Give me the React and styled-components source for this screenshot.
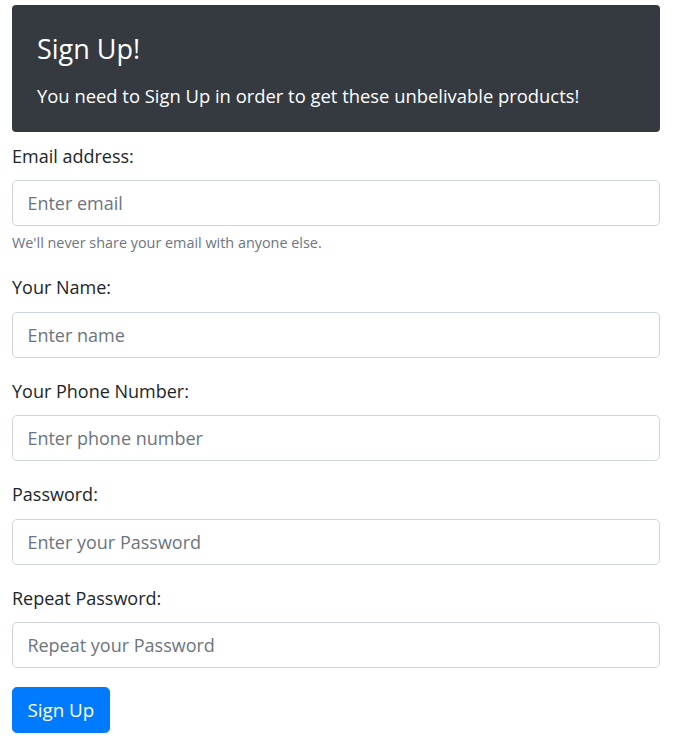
import React from 'react';
import styled, { createGlobalStyle } from 'styled-components';

const GlobalStyle = createGlobalStyle`
    * {
        box-sizing: border-box;
    }
    body {
        margin: 0;
        background: #fff;
        color: #212529;
        font-family: "Open Sans", "Noto Sans", sans-serif;
        font-size: 18px;
        line-height: 28.8px;
    }
`

const Page = styled.div`
    width: 648px;
    margin: 5px 0 0 12px;
    padding-bottom: 24px;
`
const Jumbotron = styled.div`
    background: #343a40;
    color: #fff;
    border-radius: 4px;
    padding: 27px 25px 21px;
    margin-bottom: 10px;
`
const Title = styled.h4`
    margin: 0 0 16px;
    font-size: 27px;
    font-weight: 400;
    line-height: 34px;
`
const Lead = styled.p`
    margin: 0;
    font-size: 18.4px;
    line-height: 28.8px;
`
const FormGroup = styled.div`
    margin-bottom: 19.2px;
`
const Label = styled.label`
    display: block;
    margin-bottom: 9.6px;
`
const Input = styled.input`
    display: block;
    width: 100%;
    height: 46px;
    padding: 7.2px 14.4px;
    font-family: inherit;
    font-size: 18px;
    line-height: 28.8px;
    color: #495057;
    background: #fff;
    border: 1px solid #ced4da;
    border-radius: 4.8px;
    outline: none;

    &::placeholder {
        color: #6c757d;
        opacity: 1;
    }
`
const Help = styled.small`
    display: block;
    margin-top: 4.8px;
    font-size: 14.4px;
    line-height: 23px;
    color: #6c757d;
`
const SubmitButton = styled.button`
    display: inline-block;
    height: 46px;
    padding: 7.2px 14.4px;
    font-family: inherit;
    font-size: 18.8px;
    line-height: 28.8px;
    color: #fff;
    background: #007bff;
    border: 1px solid #007bff;
    border-radius: 4.8px;
    cursor: pointer;
`

const fields = [
    { id: 'name', label: 'Your Name:', type: 'text', placeholder: 'Enter name' },
    { id: 'phone', label: 'Your Phone Number:', type: 'tel', placeholder: 'Enter phone number' },
    { id: 'password', label: 'Password:', type: 'password', placeholder: 'Enter your Password' },
    { id: 'repeat', label: 'Repeat Password:', type: 'password', placeholder: 'Repeat your Password' },
]

const App = () => {
    return (
        <>
            <GlobalStyle />
            <Page>
                <Jumbotron>
                    <Title>Sign Up!</Title>
                    <Lead>You need to Sign Up in order to get these unbelivable products!</Lead>
                </Jumbotron>
                <form onSubmit={e => e.preventDefault()}>
                    <FormGroup>
                        <Label htmlFor="email">Email address:</Label>
                        <Input id="email" type="email" placeholder="Enter email" />
                        <Help>We'll never share your email with anyone else.</Help>
                    </FormGroup>
                    {fields.map(f => (
                        <FormGroup key={f.id}>
                            <Label htmlFor={f.id}>{f.label}</Label>
                            <Input id={f.id} type={f.type} placeholder={f.placeholder} />
                        </FormGroup>
                    ))}
                    <SubmitButton type="submit">Sign Up</SubmitButton>
                </form>
            </Page>
        </>
    );
}

export default App;
